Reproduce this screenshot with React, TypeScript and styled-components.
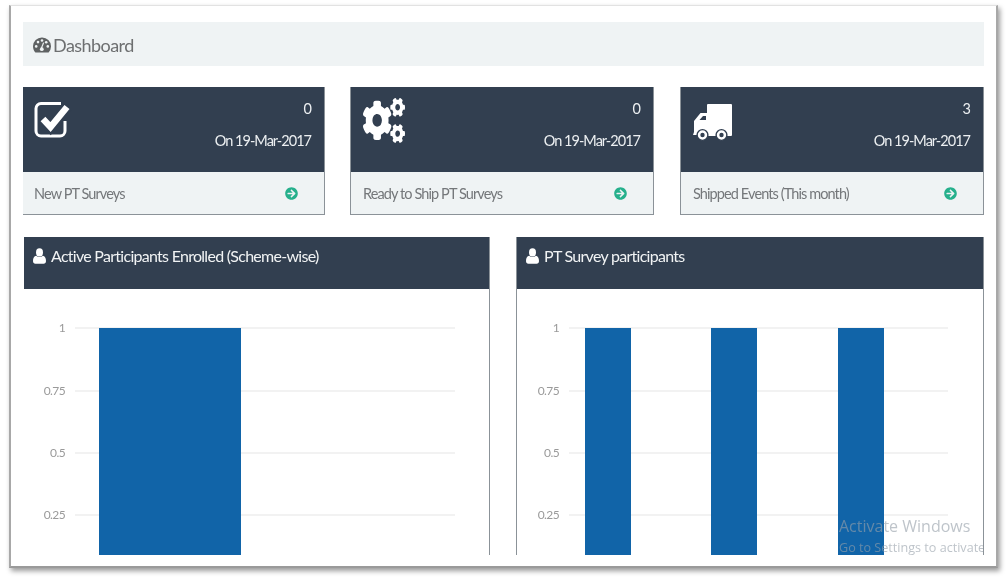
import React from "react";
import styled, { createGlobalStyle } from "styled-components";
import { FaArrowCircleRight, FaCogs } from "react-icons/fa";

const GlobalStyle = createGlobalStyle`
  html, body {
    margin: 0;
    padding: 0;
    width: 1008px;
    height: 582px;
    overflow: hidden;
    background: #ffffff;
    font-family: Lato, "Open Sans", sans-serif;
  }
`;

const Frame = styled.div`
  position: relative;
  box-sizing: border-box;
  width: 989px;
  height: 563px;
  margin: 5px 0 0 9px;
  padding: 16px 12px 11px 12px;
  background: #fff;
  border-top: 1px solid #e2e2e2;
  border-left: 2px solid #a8a8a8;
  border-right: 2px solid #a8a8a8;
  border-bottom: 2px solid #9a9a9a;
  box-shadow: 2px 3px 5px rgba(0, 0, 0, 0.4);
  display: flex;
  flex-direction: column;
  filter: blur(0.5px);
`;

const PageTitle = styled.h1`
  height: 44px;
  box-sizing: border-box;
  margin: 0 0 21px;
  padding: 2px 0 0 10px;
  display: flex;
  align-items: center;
  gap: 2px;
  background: #eff3f4;
  color: #6d6f70;
  font-size: 18px;
  font-weight: 400;
  letter-spacing: -0.55px;
`;

const GaugeIcon = styled.svg`
  width: 18px;
  height: 16px;
  color: #5f6263;
`;

const CardRow = styled.div`
  display: grid;
  grid-template-columns: 302px 304px 305px;
  column-gap: 25px;
  margin-bottom: 22px;
`;

const Card = styled.div<{ $flush?: boolean }>`
  --pad: ${(p) => (p.$flush ? "11px" : "12px")};
  height: 128px;
  box-sizing: border-box;
  display: flex;
  flex-direction: column;
  border: 1px solid #8b9298;
  border-top: none;
  border-left-width: ${(p) => (p.$flush ? "0" : "1px")};
  &:last-child {
    margin-left: 1px;
  }
`;

const CardTop = styled.div`
  height: 85px;
  background: #323f50;
  color: #fff;
  display: flex;
  justify-content: space-between;
  padding: 13px 13px 0 var(--pad);
  box-sizing: border-box;
`;

const CardIcon = styled.div<{ $top: number }>`
  margin-top: ${(p) => p.$top}px;
  svg {
    display: block;
  }
`;

const CardStats = styled.div`
  text-align: right;
  font-size: 14.5px;
  line-height: 18px;
  color: #eceff1;
  letter-spacing: -0.98px;
  div + div {
    margin-top: 14px;
  }
`;

const CardFoot = styled.div`
  flex: 1;
  background: #eff3f4;
  color: #74777a;
  font-size: 14.5px;
  letter-spacing: -0.9px;
  display: flex;
  align-items: center;
  justify-content: space-between;
  padding: 0 26px 0 var(--pad);
  svg {
    width: 13px;
    height: 13px;
    color: #26b08c;
  }
`;

const PanelRow = styled.div`
  flex: 1;
  min-height: 0;
  display: grid;
  grid-template-columns: 467px 468px;
  column-gap: 26px;
`;

const Panel = styled.section<{ $edge?: boolean }>`
  display: flex;
  flex-direction: column;
  box-sizing: border-box;
  border-right: 1.5px solid #8b9298;
  border-left: 1.5px solid ${(p) => (p.$edge ? "transparent" : "#8b9298")};
  overflow: hidden;
`;

const PanelHead = styled.h2`
  height: 52px;
  flex: none;
  margin: 0;
  padding: 0 0 15px 9px;
  box-sizing: border-box;
  background: #323f50;
  color: #f1f3f4;
  font-size: 16px;
  font-weight: 400;
  letter-spacing: -0.72px;
  display: flex;
  align-items: center;
  gap: 5px;
`;

const UserIcon = styled.svg`
  width: 13px;
  height: 16px;
  flex: none;
`;

const ChartSvg = styled.svg`
  display: block;
  flex: 1;
  width: 100%;
  min-height: 0;
`;

const AxisLabel = styled.text`
  font-family: Lato, sans-serif;
  font-size: 12px;
  letter-spacing: -0.6px;
  fill: #9a9a9a;
  text-anchor: end;
`;

const Watermark = styled.div`
  position: absolute;
  left: 828px;
  top: 508px;
  width: 144px;
  height: 46px;
  overflow: hidden;
  white-space: nowrap;
  color: rgba(150, 160, 170, 0.62);
  font-family: "Open Sans", sans-serif;
  font-size: 16px;
  line-height: 24px;
  span {
    display: block;
    font-size: 12.6px;
    line-height: 20px;
  }
`;

const Gauge = () => (
  <GaugeIcon viewBox="0 0 18 16">
    <path
      d="M9 0.5a8.8 8.8 0 0 0-9 8.8c0 2.4.9 4.6 2.4 6.2h13.2A8.9 8.9 0 0 0 18 9.3 8.8 8.8 0 0 0 9 .5z"
      fill="currentColor"
    />
    <g fill="#eff3f4">
      <circle cx="3.2" cy="9.4" r="1.3" />
      <circle cx="5" cy="5.1" r="1.3" />
      <circle cx="9" cy="3.5" r="1.3" />
      <circle cx="13.2" cy="5.3" r="1.3" />
      <circle cx="14.8" cy="9.4" r="1.3" />
      <circle cx="8.8" cy="12.2" r="1.9" />
    </g>
    <path d="M8.3 11.5 10.6 5.6" stroke="#eff3f4" strokeWidth="1.2" />
  </GaugeIcon>
);

const CheckIcon = () => (
  <svg width="38" height="38" viewBox="0 0 38 38" fill="none">
    <path
      d="M27 3.5H7a5 5 0 0 0-5 5V31a5 5 0 0 0 5 5H26a5 5 0 0 0 5-5V21"
      stroke="#fff"
      strokeWidth="3"
    />
    <path d="M9 19l7.5 8L33 7" stroke="#323f50" strokeWidth="11" />
    <path d="M9 19l7.5 8L33 7" stroke="#fff" strokeWidth="6.5" />
  </svg>
);

const TruckIcon = () => (
  <svg width="39" height="38" viewBox="0 0 39 38">
    <rect x="14" y="0" width="25" height="32" rx="1" fill="#fff" />
    <path d="M15 9H7.5L1 17v11l-1 3h15z" fill="#fff" />
    <path d="M6.5 16l3.5-4h3v4z" fill="#323f50" />
    <circle cx="9.5" cy="31" r="5.4" fill="#fff" stroke="#323f50" strokeWidth="1.4" />
    <circle cx="9.5" cy="31" r="2.2" fill="#323f50" />
    <circle cx="28.5" cy="31" r="5.4" fill="#fff" stroke="#323f50" strokeWidth="1.4" />
    <circle cx="28.5" cy="31" r="2.2" fill="#323f50" />
  </svg>
);

const User = () => (
  <UserIcon viewBox="0 0 13 16" fill="#fff">
    <ellipse cx="6.5" cy="4.4" rx="3.5" ry="4.2" />
    <path d="M3.2 7.8C1 8.2 0 10 0 13c0 1.8 1 2.8 2.4 2.8h8.2c1.4 0 2.4-1 2.4-2.8 0-3-1-4.8-3.2-5.2-.8.8-1.9 1.3-3.3 1.3s-2.5-.5-3.3-1.3z" />
  </UserIcon>
);

const cards = [
  { label: "New PT Surveys", count: 0, icon: <CheckIcon />, top: 0, flush: true },
  {
    label: "Ready to Ship PT Surveys",
    count: 0,
    icon: <FaCogs size={42} style={{ width: 42, height: 45 }} preserveAspectRatio="none" />,
    top: -2,
  },
  { label: "Shipped Events (This month)", count: 3, icon: <TruckIcon />, top: 4 },
];

const ticks = [
  { label: "1", y: 39 },
  { label: "0.75", y: 102 },
  { label: "0.5", y: 164 },
  { label: "0.25", y: 226 },
];

interface ChartProps {
  labelX: number;
  lineFrom: number;
  lineTo: number;
  bars: { x: number; w: number }[];
}

const Chart = ({ labelX, lineFrom, lineTo, bars }: ChartProps) => (
  <ChartSvg viewBox="0 0 466 266" preserveAspectRatio="xMinYMin slice">
    {ticks.map((t) => (
      <g key={t.label}>
        <line x1={lineFrom} x2={lineTo} y1={t.y} y2={t.y} stroke="#eeeeee" strokeWidth="1.5" />
        <AxisLabel x={labelX} y={t.y + 4}>
          {t.label}
        </AxisLabel>
      </g>
    ))}
    {bars.map((b) => (
      <rect key={b.x} x={b.x} y={39} width={b.w} height={227} fill="#1164a8" />
    ))}
  </ChartSvg>
);

export default function App() {
  return (
    <>
      <GlobalStyle />
      <Frame>
        <PageTitle>
          <Gauge />
          Dashboard
        </PageTitle>
        <CardRow>
          {cards.map((c) => (
            <Card key={c.label} $flush={c.flush}>
              <CardTop>
                <CardIcon $top={c.top}>{c.icon}</CardIcon>
                <CardStats>
                  <div>{c.count}</div>
                  <div>On 19-Mar-2017</div>
                </CardStats>
              </CardTop>
              <CardFoot>
                {c.label}
                <FaArrowCircleRight />
              </CardFoot>
            </Card>
          ))}
        </CardRow>
        <PanelRow>
          <Panel $edge>
            <PanelHead>
              <User />
              Active Participants Enrolled (Scheme-wise)
            </PanelHead>
            <Chart labelX={41} lineFrom={51} lineTo={431} bars={[{ x: 75, w: 142 }]} />
          </Panel>
          <Panel>
            <PanelHead>
              <User />
              PT Survey participants
            </PanelHead>
            <Chart
              labelX={42}
              lineFrom={52}
              lineTo={431}
              bars={[
                { x: 68, w: 46 },
                { x: 194, w: 46 },
                { x: 321, w: 46 },
              ]}
            />
          </Panel>
        </PanelRow>
        <Watermark>
          Activate Windows
          <span>Go to Settings to activate</span>
        </Watermark>
      </Frame>
    </>
  );
}
